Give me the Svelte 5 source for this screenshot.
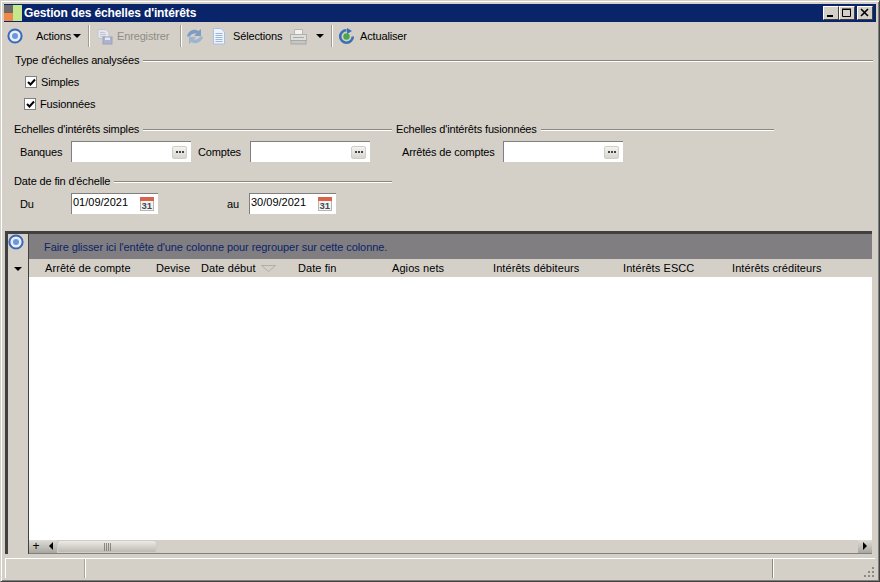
<script>
  const columns = [
    { label: 'Arrêté de compte', w: 111 },
    { label: 'Devise', w: 45 },
    { label: 'Date début', w: 97, sort: true },
    { label: 'Date fin', w: 94 },
    { label: 'Agios nets', w: 101 },
    { label: 'Intérêts débiteurs', w: 130 },
    { label: 'Intérêts ESCC', w: 109 },
    { label: 'Intérêts créditeurs', w: 110 }
  ];
</script>

{#snippet ellipsis()}
  <span class="ell"><i></i><i></i><i></i></span>
{/snippet}

{#snippet cal()}
  <svg class="cal" width="16" height="16" viewBox="0 0 16 16">
    <rect x="1.5" y="1.5" width="13" height="13" fill="#f4f2ee" stroke="#b9b5ac"/>
    <rect x="1" y="1" width="14" height="4" fill="#d9634a"/>
    <text x="2.500" y="13" class="cal-t">31</text>
  </svg>
{/snippet}

{#snippet orb()}
  <svg width="16" height="16" viewBox="0 0 16 16">
    <circle cx="8" cy="8" r="6.6" fill="#e8eefa" stroke="#3a68b8" stroke-width="2"/>
    <circle cx="8" cy="8" r="3" fill="#6d97dc"/>
  </svg>
{/snippet}

<div class="window">
  <header class="title">
    <svg width="18" height="16" viewBox="0 0 18 16" class="logo">
      <rect width="9" height="8" fill="#6d6a68"/>
      <rect y="8" width="9" height="8" fill="#f08a4a"/>
      <rect x="9" width="9" height="16" fill="#c5e88c"/>
    </svg>
    <span class="title-t">Gestion des échelles d'intérêts</span>
    <div class="wbtns">
      <button class="wb" aria-label="min"><svg width="10" height="10"><rect x="1" y="7" width="6" height="2" fill="#000"/></svg></button>
      <button class="wb" aria-label="max"><svg width="10" height="10"><path d="M0.5 1.5h8v7h-8z M0 1h9" fill="none" stroke="#000"/></svg></button>
      <button class="wb close" aria-label="close"><svg width="10" height="10"><path d="M1 1l7 7M8 1l-7 7" stroke="#000" stroke-width="1.6"/></svg></button>
    </div>
  </header>

  <nav class="toolbar">
    <span class="tb-orb">{@render orb()}</span>
    <span class="tb-actions">Actions</span><span class="arrow"></span>
    <span class="sep s1"></span>
    <svg class="t-save" width="17" height="17" viewBox="0 0 17 17">
      <path d="M2 1.5h8l3 3v6H2z" fill="#e4e6ea" stroke="#c2c6cf"/>
      <path d="M4 4.5h5M4 6.5h6M4 8.5h6" stroke="#bfc5d2"/>
      <rect x="7" y="9" width="9" height="7" fill="#aeb4cf" stroke="#9aa1c0"/>
      <rect x="9" y="9.5" width="5" height="2.5" fill="#e6e8f0"/>
    </svg>
    <span class="tb-disabled">Enregistrer</span>
    <span class="sep s2"></span>
    <svg class="t-sync" width="16" height="17" viewBox="0 0 16 17">
      <path d="M0 8.5C1 3 7 0 11.5 3L14 1v7H7l2.4-2.2C7 4.8 4 6 3 8.5z" fill="#7f9dc2"/>
      <path d="M16 8.5c-1 5.500-7 8.500-11.500 5.500L2 16V9h7l-2.400 2.200C9 12.200 12 11 13 8.500z" fill="#9db4d0"/>
    </svg>
    <svg class="t-doc" width="14" height="17" viewBox="0 0 14 17">
      <path d="M1.500 .5h7.500l3.500 3.500v12h-11z" fill="#eef3fc" stroke="#a9c0e4"/>
      <path d="M3.500 5.500h7M3.500 7.500h7M3.500 9.500h7M3.500 11.500h7M3.500 13.500h7" stroke="#9db6dd"/>
    </svg>
    <span class="tb-sel">Sélections</span>
    <svg class="t-print" width="17" height="17" viewBox="0 0 17 17">
      <path d="M4.500 1.500h8v5h-8z" fill="#f2f2f0" stroke="#b4b4b2"/>
      <rect x=".5" y="6.500" width="16" height="6" fill="#dededb" stroke="#b0b0ae"/>
      <rect x="1" y="12.500" width="15" height="3.500" fill="#c6c6c3" stroke="#a8a8a6"/>
      <rect x="3" y="9" width="11" height="1" fill="#a8a8a6"/>
    </svg>
    <span class="arrow a2"></span>
    <span class="sep s3"></span>
    <svg class="t-ref" width="17" height="17" viewBox="0 0 17 17">
      <path d="M8.500 2.200a6.300 6.300 0 1 0 6.300 6.300" fill="none" stroke="#3b70b4" stroke-width="2.600"/>
      <path d="M9 0l5 3-5 3z" fill="#3b70b4"/>
      <circle cx="8.500" cy="8.500" r="3.200" fill="#47a84a"/>
    </svg>
    <span class="tb-act">Actualiser</span>
  </nav>

  <section class="form">
    <div class="legend type"><span>Type d'échelles analysées</span><b></b></div>
    <label class="chk c1"><span class="box"><svg width="9" height="9" viewBox="0 0 9 9"><path d="M1 4l2.500 2.500L8 1.500" fill="none" stroke="#000" stroke-width="2"/></svg></span>Simples</label>
    <label class="chk c2"><span class="box"><svg width="9" height="9" viewBox="0 0 9 9"><path d="M1 4l2.500 2.500L8 1.500" fill="none" stroke="#000" stroke-width="2"/></svg></span>Fusionnées</label>

    <div class="groups">
      <div class="simple">
        <div class="legend"><span>Echelles d'intérêts simples</span><b></b></div>
        <div class="row r-s">
          <span class="lab l-b">Banques</span>
          <div class="inp">{@render ellipsis()}</div>
          <span class="lab l-c">Comptes</span>
          <div class="inp">{@render ellipsis()}</div>
        </div>
        <div class="legend date"><span>Date de fin d'échelle</span><b></b></div>
        <div class="row r-d">
          <span class="lab l-b">Du</span>
          <div class="inp dt"><span class="dv">01/09/2021</span>{@render cal()}</div>
          <span class="lab l-au">au</span>
          <div class="inp dt"><span class="dv">30/09/2021</span>{@render cal()}</div>
        </div>
      </div>
      <div class="merged">
        <div class="legend"><span>Echelles d'intérêts fusionnées</span><b></b></div>
        <div class="row r-s">
          <span class="lab l-a">Arrêtés de comptes</span>
          <div class="inp">{@render ellipsis()}</div>
        </div>
      </div>
    </div>
  </section>

  <section class="grid">
    <aside class="side">
      <span class="side-orb">{@render orb()}</span>
      <span class="side-arrow"></span>
    </aside>
    <div class="main">
      <div class="group-bar">Faire glisser ici l'entête d'une colonne pour regrouper sur cette colonne.</div>
      <div class="heads">
        {#each columns as c}
          <span class="hd" style="width:{c.w}px">{c.label}{#if c.sort}<svg class="sort" width="16" height="7" viewBox="0 0 16 7"><path d="M.5 .5h14L7.500 6.500z" fill="none" stroke="#b2aea6"/></svg>{/if}</span>
        {/each}
      </div>
      <div class="body"></div>
      <div class="scroll">
        <span class="plus">+</span>
        <span class="sb-left"></span>
        <span class="thumb"><i></i><i></i><i></i><i></i></span>
        <span class="sb-fill"></span>
        <span class="sb-right"></span>
      </div>
    </div>
  </section>

  <footer class="status">
    <span class="p1"></span>
    <span class="p2"></span>
    <span class="p3">
      <svg width="12" height="12" viewBox="0 0 12 12">
        <g fill="#8c8980">
          <rect x="9" y="1" width="2" height="2"/><rect x="5" y="5" width="2" height="2"/><rect x="9" y="5" width="2" height="2"/>
          <rect x="1" y="9" width="2" height="2"/><rect x="5" y="9" width="2" height="2"/><rect x="9" y="9" width="2" height="2"/>
        </g>
      </svg>
    </span>
  </footer>
</div>

<style>
  :global(body) { margin: 0; background: #d4d0c8; }
  .window {
    box-sizing: border-box; width: 880px; height: 582px; background: #d4d0c8;
    padding: 3px 3px 3px 3px; display: flex; flex-direction: column; overflow: hidden;
    border: 1px solid #404040; border-top-color: #d4d0c8; border-left-color: #d4d0c8;
    box-shadow: inset 1px 1px 0 #fff, inset -1px -1px 0 #808080;
    font: 11px "Liberation Sans", sans-serif; color: #000; letter-spacing: -0.15px;
  }
  .title {
    height: 18px; flex: none; display: flex; align-items: center;
    background: #0a246a; color: #fff;
  }
  .logo { flex: none; }
  .title-t { font-weight: 700; margin-left: 2px; font-size: 12px; letter-spacing: -0.13px; }
  .wbtns { margin-left: auto; display: flex; gap: 0; margin-right: 3px; }
  .wb {
    width: 16px; height: 14px; padding: 0; background: #d4d0c8; border: 1px solid;
    border-color: #fff #404040 #404040 #fff; display: flex; align-items: center; justify-content: center;
  }
  .wb.close { margin-left: 2px; }
  .toolbar { height: 28px; flex: none; display: flex; align-items: center; }
  .tb-orb { margin-left: 3px; display: flex; }
  .tb-actions { margin-left: 13px; width: 36px; }
  .arrow { width: 0; height: 0; border: 4px solid transparent; border-top-color: #000; border-bottom: 0; margin-left: 1px; }
  .sep { width: 1px; height: 22px; background: #a09c94; box-shadow: 1px 0 0 #fff; }
  .s1 { margin-left: 7px; }
  .t-save { margin-left: 7px; }
  .tb-disabled { color: #8f8c85; margin-left: 4px; width: 54px; }
  .s2 { margin-left: 9px; }
  .t-sync { margin-left: 6px; }
  .t-doc { margin-left: 9px; }
  .tb-sel { margin-left: 7px; width: 49px; }
  .t-print { margin-left: 8px; }
  .a2 { margin-left: 9px; }
  .s3 { margin-left: 7px; }
  .t-ref { margin-left: 6px; }
  .tb-act { margin-left: 5px; }

  .form { flex: none; height: 182px; padding-left: 10px; display: flex; flex-direction: column; }
  .legend { display: flex; align-items: center; height: 14px; }
  .legend span { white-space: nowrap; }
  .legend b { flex: 1; height: 1px; background: #8a877f; margin-left: 4px; box-shadow: 0 1px 0 #fff; }
  .type { margin-top: 3px; margin-left: 1px; margin-right: 3px; }
  .chk { display: flex; align-items: center; height: 14px; }
  .box {
    width: 12px; height: 12px; background: #fff; border: 1px solid; border-color: #404040 #d4d0c8 #d4d0c8 #404040;
    box-sizing: border-box; margin-right: 4px; display: flex; align-items: center; justify-content: center;
    outline: 1px solid #808080; outline-offset: -1px;
  }
  .c1 { margin-top: 8px; margin-left: 11px; }
  .c2 { margin-top: 8px; margin-left: 10px; }
  .groups { display: flex; margin-top: 11px; }
  .simple { width: 378px; }
  .merged { width: 378px; margin-left: 4px; }
  .row { display: flex; align-items: center; }
  .r-s { margin-top: 5px; height: 21px; }
  .r-d { margin-top: 5px; height: 21px; }
  .date { margin-top: 12px; }
  .l-b { width: 51px; margin-left: 6px; }
  .l-c { width: 52px; margin-left: 7px; }
  .l-a { width: 101px; margin-left: 6px; white-space: nowrap; }
  .l-au { width: 22px; margin-left: 69px; }
  .inp {
    box-sizing: border-box; width: 120px; height: 21px; background: #fff; flex: none;
    border-left: 1px solid #808080; border-top: 1px solid #808080;
    display: flex; align-items: center; justify-content: flex-end; padding-right: 4px;
  }
  .dt { width: 87px; justify-content: space-between; padding-left: 1px; padding-right: 3px; padding-bottom: 5px; }
  .dv { letter-spacing: 0; }
  .ell {
    width: 15px; height: 13px; display: flex; gap: 1px; align-items: center; justify-content: center;
    background: linear-gradient(#f4f3f0, #d8d6d0); border: 1px solid #d0cec8; border-radius: 2px; box-sizing: border-box;
  }
  .ell i { width: 2px; height: 2px; background: #444; }
  .cal { flex: none; margin-top: 5px; }
  .cal-t { font: 700 9.5px "Liberation Sans", sans-serif; fill: #3f4a5c; letter-spacing: 0; }

  .grid {
    flex: 1; min-height: 0; display: flex; margin-left: 1px; margin-right: 4px;
    border-top: 3px solid #404040; border-left: 3px solid #404040; margin-top: -1px;
  }
  .side { width: 20px; flex: none; position: relative; border-right: 1px solid #404040; background: #d4d0c8; }
  .side-orb { position: absolute; left: 0; top: 0; display: flex; }
  .side-arrow { position: absolute; left: 6px; top: 33px; width: 0; height: 0; border: 4px solid transparent; border-top-color: #000; border-bottom: 0; }
  .main { flex: 1; min-width: 0; display: flex; flex-direction: column; }
  .group-bar { height: 25px; flex: none; background: #807e80; color: #0a246a; display: flex; align-items: center; padding-left: 15px; box-sizing: border-box; letter-spacing: -0.07px; }
  .heads { height: 18px; flex: none; display: flex; align-items: center; padding-left: 16px; letter-spacing: 0.08px; }
  .hd { white-space: nowrap; display: flex; align-items: center; flex: none; }
  .sort { margin-left: 5px; }
  .body { flex: 1; background: #fff; }
  .scroll { height: 13px; flex: none; display: flex; align-items: stretch; background: #d4d0c8; border-bottom: 1px solid #808080; }
  .plus { width: 14px; background: linear-gradient(#dedcd6, #a8a69f); text-align: center; line-height: 13px; font-size: 12px; color: #000; }
  .sb-left { width: 14px; position: relative; background: linear-gradient(#dedcd6, #a8a69f); }
  .sb-left::after { content: ''; position: absolute; left: 6px; top: 2px; border: 4px solid transparent; border-right-color: #000; border-left: 0; }
  .thumb {
    width: 100px; background: linear-gradient(#eceae6, #bdbab2); border: 1px solid #d0cdc6; border-radius: 3px;
    display: flex; gap: 1px; align-items: center; justify-content: center; box-sizing: border-box;
  }
  .thumb i { width: 1px; height: 8px; background: #8a877f; }
  .sb-fill { flex: 1; }
  .sb-right { width: 14px; position: relative; background: linear-gradient(#dedcd6, #a8a69f); }
  .sb-right::after { content: ''; position: absolute; left: 5px; top: 2px; border: 4px solid transparent; border-left-color: #000; border-right: 0; }
  .status { height: 19px; flex: none; display: flex; margin-top: 4px; border-top: 1px solid #fff; border-left: 1px solid #fff; margin-left: 1px; margin-right: 1px; }
  .status span { box-sizing: border-box; }
  .p1 { width: 80px; border-right: 1px solid #fff; box-shadow: inset -1px 0 0 #a8a49c; }
  .p2 { width: 687px; border-right: 1px solid #8a877f; box-shadow: 1px 0 0 #fff; }
  .p3 { flex: 1; display: flex; align-items: flex-end; justify-content: flex-end; }
</style>
